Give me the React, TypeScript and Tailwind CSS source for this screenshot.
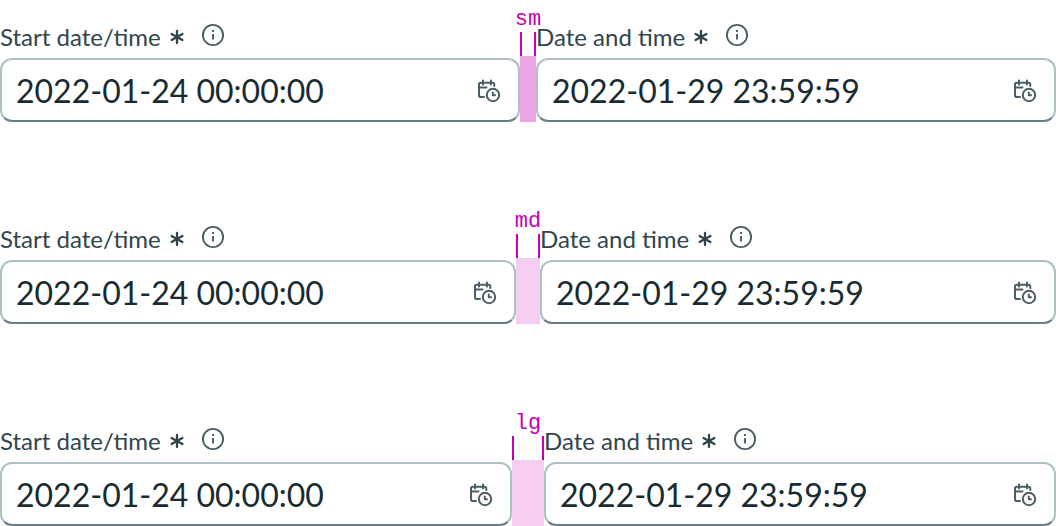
import React, { useId } from 'react';

const AsteriskIcon = () => (
  <svg className="h-4 w-4 shrink-0" viewBox="0 0 16 16" fill="none" stroke="currentColor" strokeWidth="2.3" strokeLinecap="round">
    <path d="M8 2v12M2.6 5l10.8 6M13.4 5L2.6 11" />
  </svg>
);

const InfoIcon = () => (
  <svg className="h-6 w-6" viewBox="0 0 24 24" fill="none" stroke="currentColor" strokeWidth="1.9">
    <circle cx="12" cy="12" r="10.1" />
    <path d="M12 11v5.6M12 7v2" />
  </svg>
);

const CalendarClockIcon = () => (
  <svg className="h-6 w-6" viewBox="0 0 24 24" fill="none" stroke="currentColor" strokeWidth="2" strokeLinecap="round" strokeLinejoin="round">
    <path d="M17.3 7V5.500a1.800 1.800 0 0 0-1.800-1.800H3.800A1.800 1.800 0 0 0 2 5.500v10.700A1.800 1.800 0 0 0 3.800 18H7" />
    <path d="M6 1.600v4M14 1.600v4M2 8.600h7.500" />
    <circle cx="16" cy="16" r="6.200" />
    <path d="M15.800 13.500v2.700h2.200" />
  </svg>
);

const DateField = ({ label, value }: { label: string; value: string }) => {
  const id = useId();

  return (
    <div className="min-w-0 flex-1">
      <div className="mb-1 flex h-[34px] items-center text-[#30454d]">
        <label htmlFor={id} className="flex items-center gap-2 text-2xl whitespace-nowrap">
          {label}
          <AsteriskIcon />
        </label>
        <button type="button" aria-label={`About ${label}`} className="mb-1 ml-4 text-[#4a5e66]">
          <InfoIcon />
        </button>
      </div>
      <div className="flex h-16 items-center rounded-xl border-2 border-[#aebfc6] border-b-[#657e87] bg-white pt-0.5 pr-[17px] pl-3.5">
        <input
          id={id}
          type="text"
          defaultValue={value}
          className="w-full min-w-0 flex-1 bg-transparent text-[32px] text-[#182b31] outline-none"
        />
        <button type="button" aria-label="Choose date and time" className="text-[#4a5e66]">
          <CalendarClockIcon />
        </button>
      </div>
    </div>
  );
};

const rows = [
  { name: 'sm', width: 'w-4', fill: 'bg-[#eba5e4]' },
  { name: 'md', width: 'w-6', fill: 'bg-[#f5cdf0]' },
  { name: 'lg', width: 'w-8', fill: 'bg-[#f5cdf0]' },
];

const App = () => {
  return (
    <main className="flex flex-col gap-20 overflow-hidden bg-white font-['Lato',sans-serif]">
      {rows.map((row) => (
        <section key={row.name} className="flex items-end pt-2">
          <DateField label="Start date/time" value="2022-01-24 00:00:00" />

          {/* Spacing marker */}
          <div className={`flex shrink-0 flex-col items-center ${row.width}`}>
            <span className="font-['Liberation_Mono',monospace] text-[22px] leading-6 text-[#c800b4]">{row.name}</span>
            <div className="h-6 w-full border-x-2 border-[#c800b4]"></div>
            <div className={`h-[66px] w-full ${row.fill}`}></div>
          </div>

          <DateField label="Date and time" value="2022-01-29 23:59:59" />
        </section>
      ))}
    </main>
  );
};

export default App;
